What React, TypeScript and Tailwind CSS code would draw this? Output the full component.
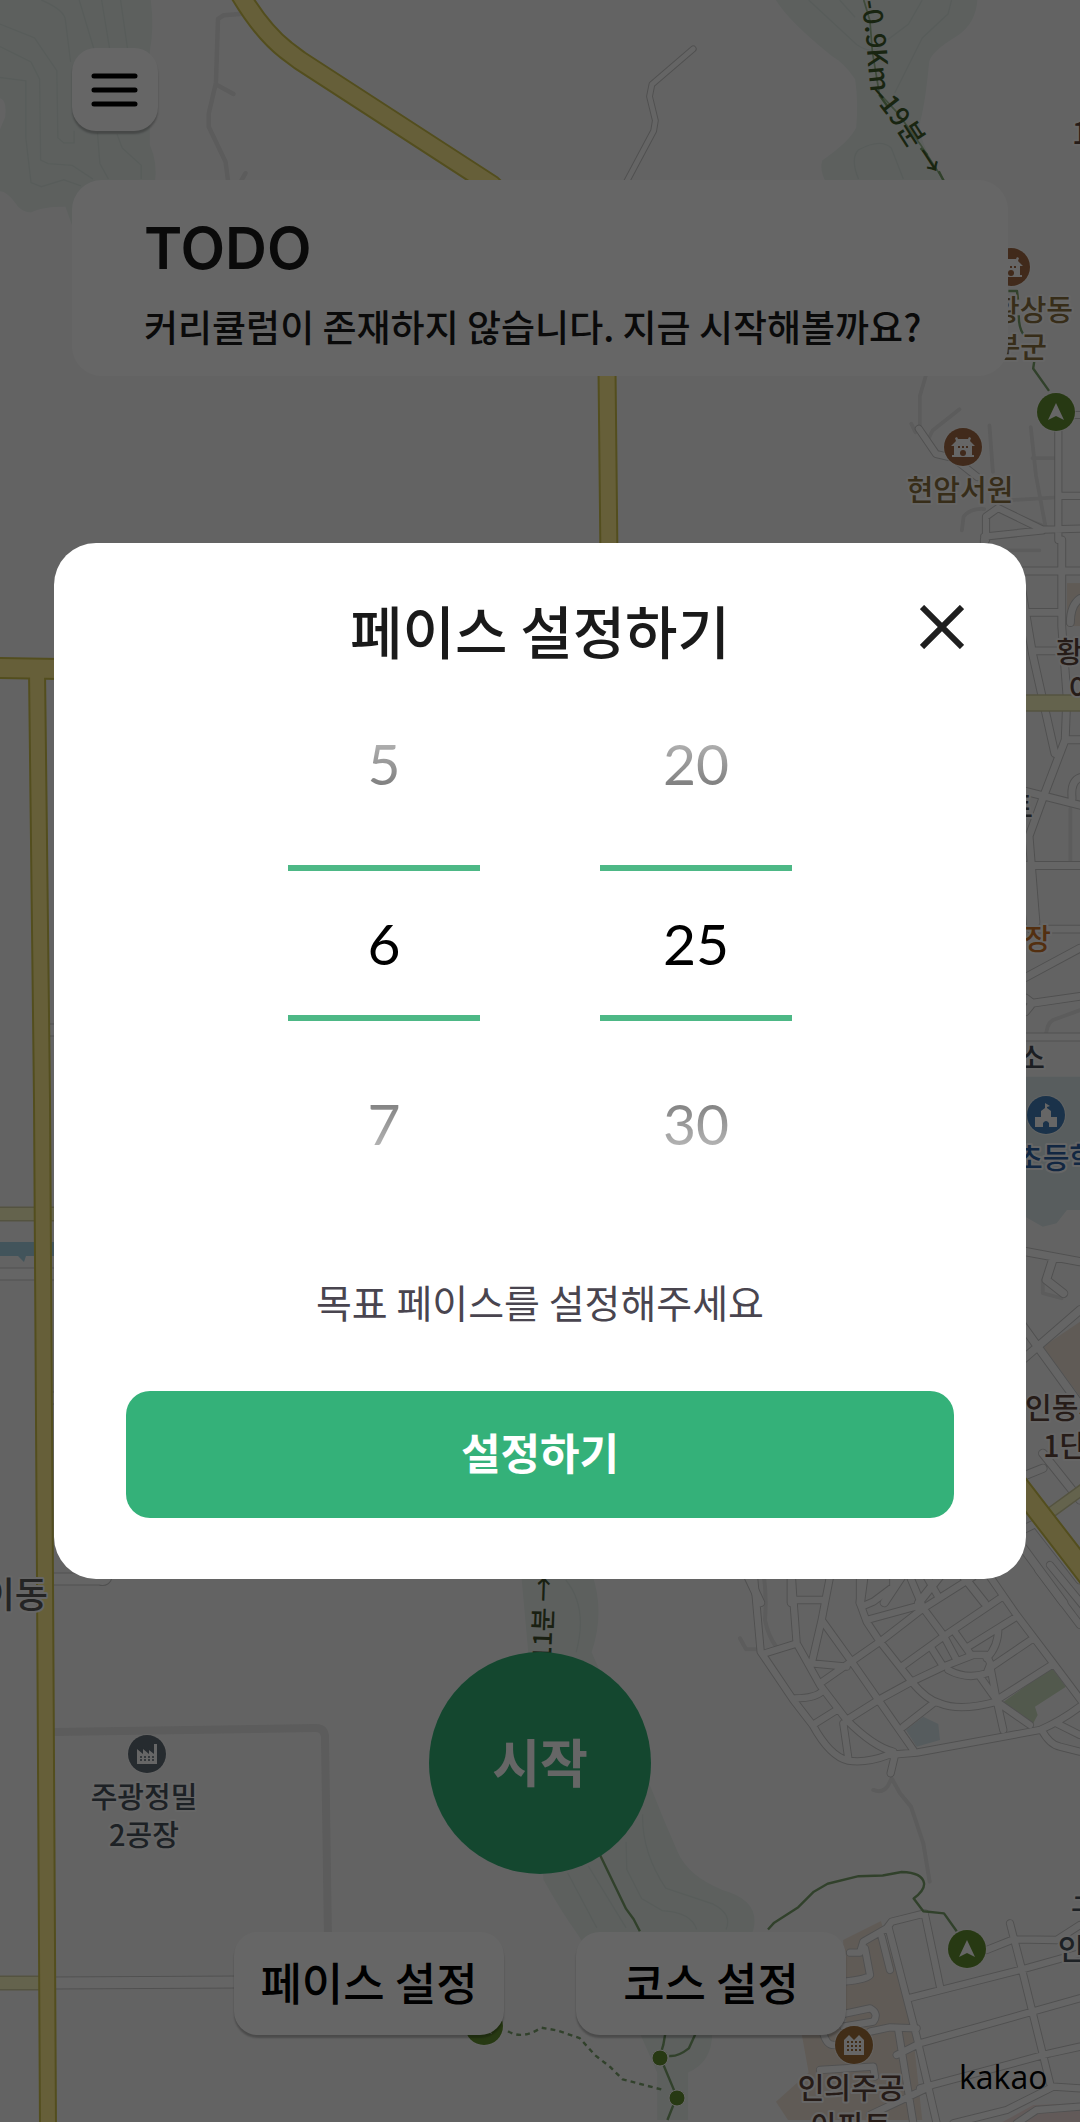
import React, { useState } from "react";

type Road = { at: string; w: number; d: string };

/* Survey sheets: every sheet has its own origin and drawing scale. */
const A = "translate(0 0) scale(.3444)";
const B = "translate(540 0) scale(.3444)";
const D = "translate(540 540) scale(.3444)";
const F = "translate(540 1080) scale(.3444 .3333)";
const G = "translate(0 1580) scale(.3444)";
const H = "translate(540 1580) scale(.3444)";
const J = "translate(740 1570) scale(.3333)";
const K = "translate(820 1890) scale(.3333)";
const W = "translate(0 0)";

const streets: Road[] = [
  { at: B, w: 14, d: "M445 142 L325 245 L318 280 L335 350 L330 380 L250 530" },
  { at: B, w: 18, d: "M1505 1250 V1568 M1515 1440 H1568 M1295 1568 V1500 L1330 1475 L1460 1538 L1568 1535 M1290 1558 L1460 1540 M1100 1245 L1150 1318 L1200 1330 L1270 1385 M1540 1205 H1568" },
  { at: D, w: 20, d: "M1290 0 V90 H1568 M1515 0 V250 L1530 450 L1525 580 L1460 750 L1420 860 L1440 1110 M1410 210 H1510 M1400 150 L1430 330 L1495 620 M1430 322 H1515 M1410 730 L1568 770 M1410 945 H1568 M1410 950 L1425 1130 H1568 M1410 1270 L1568 1185 M1410 1330 L1430 1345 L1568 1325 M1430 1345 L1410 1370 M1410 1443 H1568 M1525 580 H1568 M1568 690 Q1540 700 1545 750 M1568 170 Q1540 190 1540 240" },
  { at: F, w: 22, d: "M1410 515 L1568 545 M1490 535 L1470 600 L1520 640 M1400 735 L1445 800 L1568 975 M1445 800 L1568 690 M1445 800 L1400 840 M1460 1120 L1568 1260 M1460 1165 L1400 1190 M1400 1400 L1520 1568 M1400 1350 L1440 1330 L1568 1500 M600 1480 L640 1568 M730 1490 V1568 M940 1490 L930 1568 M1000 1568 L1050 1490 M1100 1568 L1160 1490 M1230 1490 L1290 1568" },
  { at: J, w: 19, d: "M42 20 L62 245 L160 390 L218 465 Q270 560 325 572 Q380 580 445 555 L530 548 L900 480 Q960 455 1020 410 M75 250 L165 222 M155 20 L170 220 L240 345 L320 450 Q400 530 460 545 M270 20 L245 150 L335 275 L520 540 M245 150 L215 280 L320 290 M240 340 L420 215 L550 115 L700 20 M170 90 H255 M165 385 Q230 385 250 360 M218 465 L290 420 M320 450 L415 390 L515 335 L610 290 L700 255 H740 L755 290 L880 205 M360 20 V100 L380 155 L420 215 L515 335 Q560 390 600 400 Q660 425 770 395 M365 110 L400 95 L460 50 V20 M380 150 L545 105 M510 20 L550 115 L610 195 M560 20 L595 80 M485 290 L610 200 L780 85 M750 20 L830 135 L940 280 L1030 400 M685 230 L830 140 M775 175 Q775 230 740 265 M640 180 L690 250 M575 235 L610 290 M610 195 L650 270 M490 470 L580 400 M625 300 Q680 330 740 310 L750 285 L770 390 L790 480 M770 390 L935 285 M720 320 L770 390 M770 395 L870 465 M905 480 Q930 525 960 530 L1020 545 M950 460 L1020 495 M310 460 L325 565 M465 555 L452 610 M895 0 L1020 165 M930 -15 L1040 120" },
  { at: K, w: 19, d: "M90 188 H120 L130 155 L200 115 L215 95 L315 70 M205 110 L290 440 L350 700 M315 75 L360 290 M265 325 L600 240 L780 190 M135 175 L150 255 Q145 268 70 275 M185 140 L210 240 M570 100 L605 235 L690 580 M500 180 L580 148 L710 150 L780 105 M230 495 L300 460 L780 325 M150 425 L210 412 L290 415 M70 372 L150 355 Q178 370 160 395 L70 410 M235 420 L280 700 M300 595 L690 490 L780 470 M400 700 L560 660 L700 590 L780 595 M0 540 L160 530 L165 560 M150 675 L330 590 M10 430 Q20 465 40 465 M590 700 L650 660 L780 650" },
  { at: W, w: 11, d: "M0 1274 H54 M52 1983 L240 1982 M48 1030 H54 M48 1398 H54 M50 1579 H100 Q106 1581 106 1575" },
];

const mainRoads: Road[] = [
  { at: A, w: 48, d: "M695 -20 Q760 90 830 145 L870 175 L1430 538" },
  { at: W, w: 15, d: "M607 370 L609 560" },
  { at: W, w: 18, d: "M0 668 L60 669" },
  { at: W, w: 14, d: "M37 670 L42 1100 L45 1580 L48 2130" },
  { at: F, w: 54, d: "M1380 1205 L1600 1500" },
];

const minorRoads: Road[] = [
  { at: D, w: 42, d: "M1400 473 H1580" },
  { at: W, w: 12, d: "M0 1214 H60 M0 1983 H44" },
  { at: F, w: 26, d: "M1480 1300 L1580 1225" },
];

function RoadLayer({ roads, fill, edge, rim }: { roads: Road[]; fill: string; edge: string; rim: number }) {
  const rimOf = (r: Road) => (r.at === W ? rim : rim * 2.9);
  return (
    <g fill="none" strokeLinecap="round" strokeLinejoin="round">
      {roads.map((r) => (
        <path key={"e" + r.d} transform={r.at} d={r.d} stroke={edge} strokeWidth={r.w + rimOf(r)} />
      ))}
      {roads.map((r) => (
        <path key={"f" + r.d} transform={r.at} d={r.d} stroke={fill} strokeWidth={r.w} />
      ))}
    </g>
  );
}

function Pin({ x, y, color, kind }: { x: number; y: number; color: string; kind: "peak" | "hall" | "flats" | "plant" | "school" }) {
  return (
    <g transform={`translate(${x} ${y})`}>
      <circle r="20" fill="#fff" opacity=".6" />
      <circle r="19" fill={color} />
      {kind === "peak" && <path d="M0 -9 L8 8 L0 4 L-8 8Z" fill="#fff" />}
      {kind === "hall" && (
        <>
          <path d="M-6 -10 L-5 -8 H5 L6 -10 L8 -9 L7 -6 L12 -1 H9 V8 H11 V10 H-11 V8 H-9 V-1 H-12 L-7 -6 L-8 -9Z" fill="#fff" />
          <path d="M-5 -1h2v2h-2z M-1 -1h2v2h-2z M3 -1h2v2h-2z" fill={color} />
          <circle cy="6" r="3" fill={color} />
        </>
      )}
      {kind === "flats" && (
        <>
          <path d="M-10 10 V-5 L-5 -10 L0 -5 L5 -10 L10 -5 V10Z" fill="#fff" />
          <path d="M-7 -3h14 M-7 1h14 M-7 5h14" stroke={color} strokeWidth="2" strokeDasharray="2 2" />
        </>
      )}
      {kind === "plant" && (
        <>
          <path d="M-10 10 V-5 L-4 0 V-5 L2 0 V-4 L7 0 V-10 H10 V10Z" fill="#fff" />
          <path d="M-7 3h14 M-7 6h14" stroke={color} strokeWidth="1.5" strokeDasharray="2 2" />
        </>
      )}
      {kind === "school" && (
        <path d="M-11 12 V2 H-5 V-4 L-1 -7 V-12 L4 -9 L1 -8 V-7 L5 -4 V2 H11 V12 H3 V8 Q0 4 -3 8 V12Z" fill="#fff" />
      )}
    </g>
  );
}

function Label({ x, y, color, anchor = "start", size = 29, children }: { x: number; y: number; color: string; anchor?: "start" | "middle" | "end"; size?: number; children: React.ReactNode }) {
  return (
    <text x={x} y={y} fontSize={size} textAnchor={anchor} fill={color} stroke="#fff" strokeWidth="4" strokeLinejoin="round" paintOrder="stroke" fontWeight="500">
      {children}
    </text>
  );
}

function MapBackground() {
  return (
    <svg aria-hidden="true" viewBox="0 0 1080 2122" preserveAspectRatio="xMidYMid slice" className="absolute inset-0 h-full w-full bg-[#f8f8f8]">
      {/* woodland, parks and blocks */}
      <g fill="#e8f0ec">
        <path transform={A} d="M0 0 H438 Q448 80 435 150 V420 Q458 470 450 530 H270 L213 665 L190 600 Q120 600 90 617 Q60 615 45 590 Q20 555 0 555Z" />
        <path transform={B} d="M685 0 H1270 Q1265 70 1210 105 Q1135 150 1130 180 Q1120 290 1105 350 Q1090 400 1175 530 H830 Q810 490 820 465 Q900 410 918 370 Q925 300 915 230 Q880 180 850 165 Q720 60 685 0Z" />
        <path transform={H} d="M-55 -20 H150 Q190 90 150 210 L325 610 Q360 700 400 790 Q430 860 530 900 Q640 930 620 1015 L500 1316 Q500 1400 430 1430 V1568 H340 V1430 L290 1316 L110 1030 Q60 960 10 870 L-35 200Z" />
      </g>
      <path transform={A} d="M0 285 Q20 290 15 340 L0 375Z" fill="#f8f8f8" />
      <g fill="none" stroke="#dce7e1" strokeWidth="4">
        <path transform={A} d="M120 0 Q190 30 190 60 L205 180 M230 0 L272 140 M295 0 L318 140 M350 0 L370 140 M0 70 L100 110 L165 205 L168 400 L185 415 H215 V380 M0 135 L90 180 L115 230 L118 465 L140 475 L210 480 L270 520 M0 225 L75 235 V400 L90 530 L120 542 L185 522 L235 540 M283 385 L290 475 L315 520 M340 390 L355 430 L410 480 V520" />
        <path transform={B} d="M780 0 L920 130 Q980 170 1005 110 M870 0 L915 50 M1110 0 L1070 70 L1010 115 M1195 0 L1185 40 L1110 110 L1030 270 M925 520 Q900 460 925 435 Q990 400 1020 430 L1055 520" />
        <path transform={H} d="M75 0 Q140 80 105 210 M80 850 L165 1010 M140 830 L250 1010 M250 760 L252 840 L295 925 L355 960 Q440 965 455 1015 M298 680 Q295 790 365 895 L500 940 Q560 970 540 1015" />
      </g>
      <path transform={H} d="M880 1045 L990 990 L1080 1290 L1110 1568 H720 L685 1515 L780 1430 L760 1320 L890 1300Z" fill="#f0e4d8" />
      <path transform={K} d="M540 700 L640 645 L780 640 V700Z" fill="#f5e2df" />
      <path transform={F} d="M1400 -10 H1568 V390 L1530 390 L1500 430 L1460 440 L1400 405Z" fill="#dbe8ea" />
      <path transform={F} d="M1460 800 L1568 725 V950Z" fill="#f0e4d8" />
      <path transform={D} d="M1530 125 H1568 V250 H1530Z" fill="#f0e4d8" />
      <path transform={J} d="M785 400 L935 292 L978 350 L885 410 L893 435 L880 460Z" fill="#cddfc0" />
      <path transform={J} d="M498 480 L550 440 L595 462 L600 510 L530 530Z" fill="#d7e6eb" />
      <path d="M0 1242 H54 V1256 H26 L24 1262 L18 1256 H0Z" fill="#a6d3e3" />

      {/* footpaths */}
      <g fill="none" stroke="#e5e5e5" strokeLinejoin="round" strokeLinecap="round">
        <path transform={A} strokeWidth="13" d="M705 40 L650 44 L633 55 L627 240 L606 330 V368 L655 470 L662 525 M627 245 L678 273 M713 503 L700 525" />
        <path transform={B} strokeWidth="11" d="M1120 1092 L1103 1150 V1245 M1218 1188 L1140 1250 L1130 1270 M1078 1230 L1090 1255 M1305 1235 L1315 1370 M1425 1240 L1440 1380 L1468 1530 M1430 1330 H1500 M1370 1452 L1500 1444 M1225 1540 L1230 1500 Q1250 1475 1290 1478 M1340 1480 L1470 1530" />
        <path transform={D} strokeWidth="11" d="M1290 30 H1450 M1540 780 V940 M1470 1430 Q1475 1395 1500 1390 L1568 1365" />
        <path transform={F} strokeWidth="11" d="M1460 600 V640 L1515 655" />
        <path transform={J} strokeWidth="12" d="M0 205 L18 238 H50 M72 20 Q80 80 75 150 Q85 200 110 232 M455 625 L445 645 Q430 672 400 660 M455 625 L480 670 L513 710 L550 820 L569 935" />
        <path strokeWidth="8" strokeLinecap="butt" d="M54 1732 L316 1728 Q325 1728 325 1738 L328 1940" />
      </g>

      <RoadLayer roads={streets} fill="#fdfdfd" edge="#c8c8c8" rim={2} />
      <RoadLayer roads={minorRoads} fill="#faf7c0" edge="#d2cfa0" rim={3} />
      <RoadLayer roads={mainRoads} fill="#ffee8e" edge="#cfc24c" rim={4} />

      {/* hiking trails */}
      <g fill="none" stroke="#7ba26d" strokeWidth="7" strokeLinejoin="round">
        <path transform={B} d="M940 0 L958 60 L965 150 L985 270 L1040 330 L1105 420 L1173 525" stroke="#9dbb92" strokeWidth="5" />
        <path transform={B} d="M985 275 L1010 310 M1105 430 L1125 450 M1158 497 L1172 525 M1360 845 H1385 L1388 870 M1390 915 Q1390 950 1403 970 M1435 1050 L1432 1070 L1478 1135" />
        <path transform={H} d="M175 800 L250 955 L272 985 L290 1020 M662 1015 L680 995 L750 950 L795 905 L835 882 L925 860 L995 858 L1050 848 Q1110 850 1115 880 Q1118 900 1085 925 L1113 962 L1173 968 L1210 1020 M365 1310 L358 1350 L348 1383 L397 1500 L370 1568 M455 1310 L432 1360 Q400 1385 375 1382" />
        <path transform={G} strokeDasharray="14 12" d="M1475 1310 Q1515 1335 1568 1302" />
        <path transform={H} strokeDasharray="14 12" d="M5 1300 L50 1308 L115 1330 L160 1380 L205 1415 L240 1450 L355 1480" />
      </g>
      <g fill="#638f30" stroke="#fff" strokeWidth="1">
        <circle cx="660" cy="2058" r="8" />
        <circle cx="677" cy="2098" r="8" />
      </g>
      <path id="trail-caption" d="M861 0 L866 34 L868 65 L871 96 Q882 108 900 134 L940 196" fill="none" />
      <text fontSize="27" fontWeight="500" fill="#3f5c2c">
        <textPath href="#trail-caption" startOffset="1">-0.9Km–19분 →</textPath>
      </text>
      <text transform="translate(554 1576) rotate(-88)" textAnchor="end" fontSize="26" fontWeight="500" fill="#41502f">
        0.4Km 11분 →
      </text>

      <Pin x={1011} y={267} color="#a26a44" kind="hall" />
      <Pin x={963} y={447} color="#a26a44" kind="hall" />
      <Pin x={1056} y={412} color="#638f30" kind="peak" />
      <Pin x={1046} y={1115} color="#427eb8" kind="school" />
      <Pin x={147} y={1754} color="#5f6b75" kind="plant" />
      <Pin x={484} y={2026} color="#638f30" kind="peak" />
      <Pin x={967} y={1949} color="#638f30" kind="peak" />
      <Pin x={854} y={2045} color="#a2703a" kind="flats" />

      <Label x={1073} y={321} color="#8b7040" anchor="end">구미황상동</Label>
      <Label x={1047} y={358} color="#8b7040" anchor="end">고분군</Label>
      <Label x={960} y={501} color="#8b7040" anchor="middle">현암서원</Label>
      <Label x={1072} y={144} color="#5f463c">1단지</Label>
      <Label x={1056} y={663} color="#5f463c">황상</Label>
      <Label x={1069} y={700} color="#5f463c">아파트</Label>
      <Label x={1033} y={818} color="#4b4e52" anchor="end">마트</Label>
      <Label x={1051} y={950} color="#cf7628" anchor="end">시장</Label>
      <Label x={1045} y={1069} color="#464c56" anchor="end">소</Label>
      <Label x={1016} y={1169} color="#2f62a6">초등학교</Label>
      <Label x={1025} y={1419} color="#5f463c">인동시</Label>
      <Label x={1043} y={1457} color="#5f463c">1단지</Label>
      <Label x={48} y={1608} color="#5a5a5a" anchor="end" size={36}>이동</Label>
      <Label x={144} y={1808} color="#4a545c" anchor="middle">주광정밀</Label>
      <Label x={144} y={1846} color="#4a545c" anchor="middle">2공장</Label>
      <Label x={1071} y={1920} color="#4a545c">구미</Label>
      <Label x={1058} y={1960} color="#4a545c">인동</Label>
      <Label x={851} y={2099} color="#5f463c" anchor="middle">인의주공</Label>
      <Label x={851} y={2137} color="#5f463c" anchor="middle">아파트</Label>
      <text x="959" y="2089" fontSize="32" fontWeight="500" fill="#000" fontFamily="'Open Sans', sans-serif">kakao</text>
    </svg>
  );
}

function Wheel({ label, values, selected, onSelect }: { label: string; values: number[]; selected: number; onSelect: (v: number) => void }) {
  return (
    <div role="group" aria-label={label} className="relative w-48">
      <div className="[mask-image:linear-gradient(to_bottom,transparent_0px,black_225px,black_315px,transparent_540px)]">
        {values.map((v) => (
          <button
            key={v}
            type="button"
            aria-pressed={v === selected}
            onClick={() => onSelect(v)}
            className="flex h-[180px] w-full items-center justify-center font-[Lato,sans-serif] text-[57px] leading-none text-black"
          >
            {v}
          </button>
        ))}
      </div>
      <div className="pointer-events-none absolute inset-x-0 top-48 h-[156px] border-y-6 border-[#4db886]" />
    </div>
  );
}

export default function App() {
  const [minute, setMinute] = useState(6);
  const [second, setSecond] = useState(25);

  return (
    <div className="relative flex min-h-screen flex-col overflow-hidden font-['Noto_Sans_CJK_KR',sans-serif]">
      <MapBackground />

      <header className="relative flex flex-col items-start px-18 pt-12">
        <button type="button" aria-label="메뉴" className="flex h-[83px] w-[86px] items-center justify-center rounded-3xl bg-white shadow-[0_3px_2px_rgba(0,0,0,0.25)]">
          <svg viewBox="0 0 48 36" className="h-9 w-12" stroke="#000" strokeWidth="5" strokeLinecap="round">
            <path d="M3 4H44M3 18H44M3 32H44" />
          </svg>
        </button>
        <section className="mt-[49px] w-full rounded-[30px] bg-white px-18 pt-8 pb-[18px]">
          <h1 className="font-[Inter,sans-serif] text-[58px] leading-[72px] font-semibold text-[#1a1a1a]">TODO</h1>
          <p className="mt-2.5 text-[37px] leading-16 font-medium whitespace-nowrap text-[#1a1a1a]">커리큘럼이 존재하지 않습니다. 지금 시작해볼까요?</p>
        </section>
      </header>

      <footer className="relative mt-auto flex flex-col items-center pb-[87px]">
        <button type="button" className="flex size-[222px] items-center justify-center rounded-full bg-[#34b277] pb-1 text-[52px] font-bold text-white">
          시작
        </button>
        <div className="mt-[58px] flex gap-18">
          <button type="button" className="h-[103px] w-[270px] rounded-3xl bg-white pb-1 text-[45px] font-medium text-black shadow-[0_3px_2px_rgba(0,0,0,0.25)]">
            페이스 설정
          </button>
          <button type="button" className="h-[103px] w-[270px] rounded-3xl bg-white pb-1 text-[45px] font-medium text-black shadow-[0_3px_2px_rgba(0,0,0,0.25)]">
            코스 설정
          </button>
        </div>
      </footer>

      <div className="absolute inset-0 flex items-center justify-center bg-black/60">
        <div role="dialog" aria-modal="true" aria-labelledby="pace-title" className="flex w-[90%] flex-col rounded-[42px] bg-white px-18 pt-[54px] pb-[61px]">
          <div className="grid grid-cols-[1fr_auto_1fr] items-start">
            <h2 id="pace-title" className="col-start-2 text-[57px] leading-16 font-medium text-[#1a1a1a]">
              페이스 설정하기
            </h2>
            <button type="button" aria-label="닫기" className="-mr-[18px] flex size-[60px] items-center justify-center justify-self-end">
              <svg viewBox="0 0 44 44" className="size-11" stroke="#1f1f1f" strokeWidth="6">
                <path d="M2 2L42 42M42 2L2 42" />
              </svg>
            </button>
          </div>
          <div className="mt-3 flex justify-center gap-30">
            <Wheel label="분" values={[5, 6, 7]} selected={minute} onSelect={setMinute} />
            <Wheel label="초" values={[20, 25, 30]} selected={second} onSelect={setSecond} />
          </div>
          <p className="mt-[58px] text-center text-[39px] leading-[60px] text-[#49454f]">목표 페이스를 설정해주세요</p>
          <button type="button" className="mt-[60px] h-[127px] rounded-3xl bg-[#34b179] pb-1.5 text-[43px] font-bold text-white">
            설정하기
          </button>
        </div>
      </div>
    </div>
  );
}
